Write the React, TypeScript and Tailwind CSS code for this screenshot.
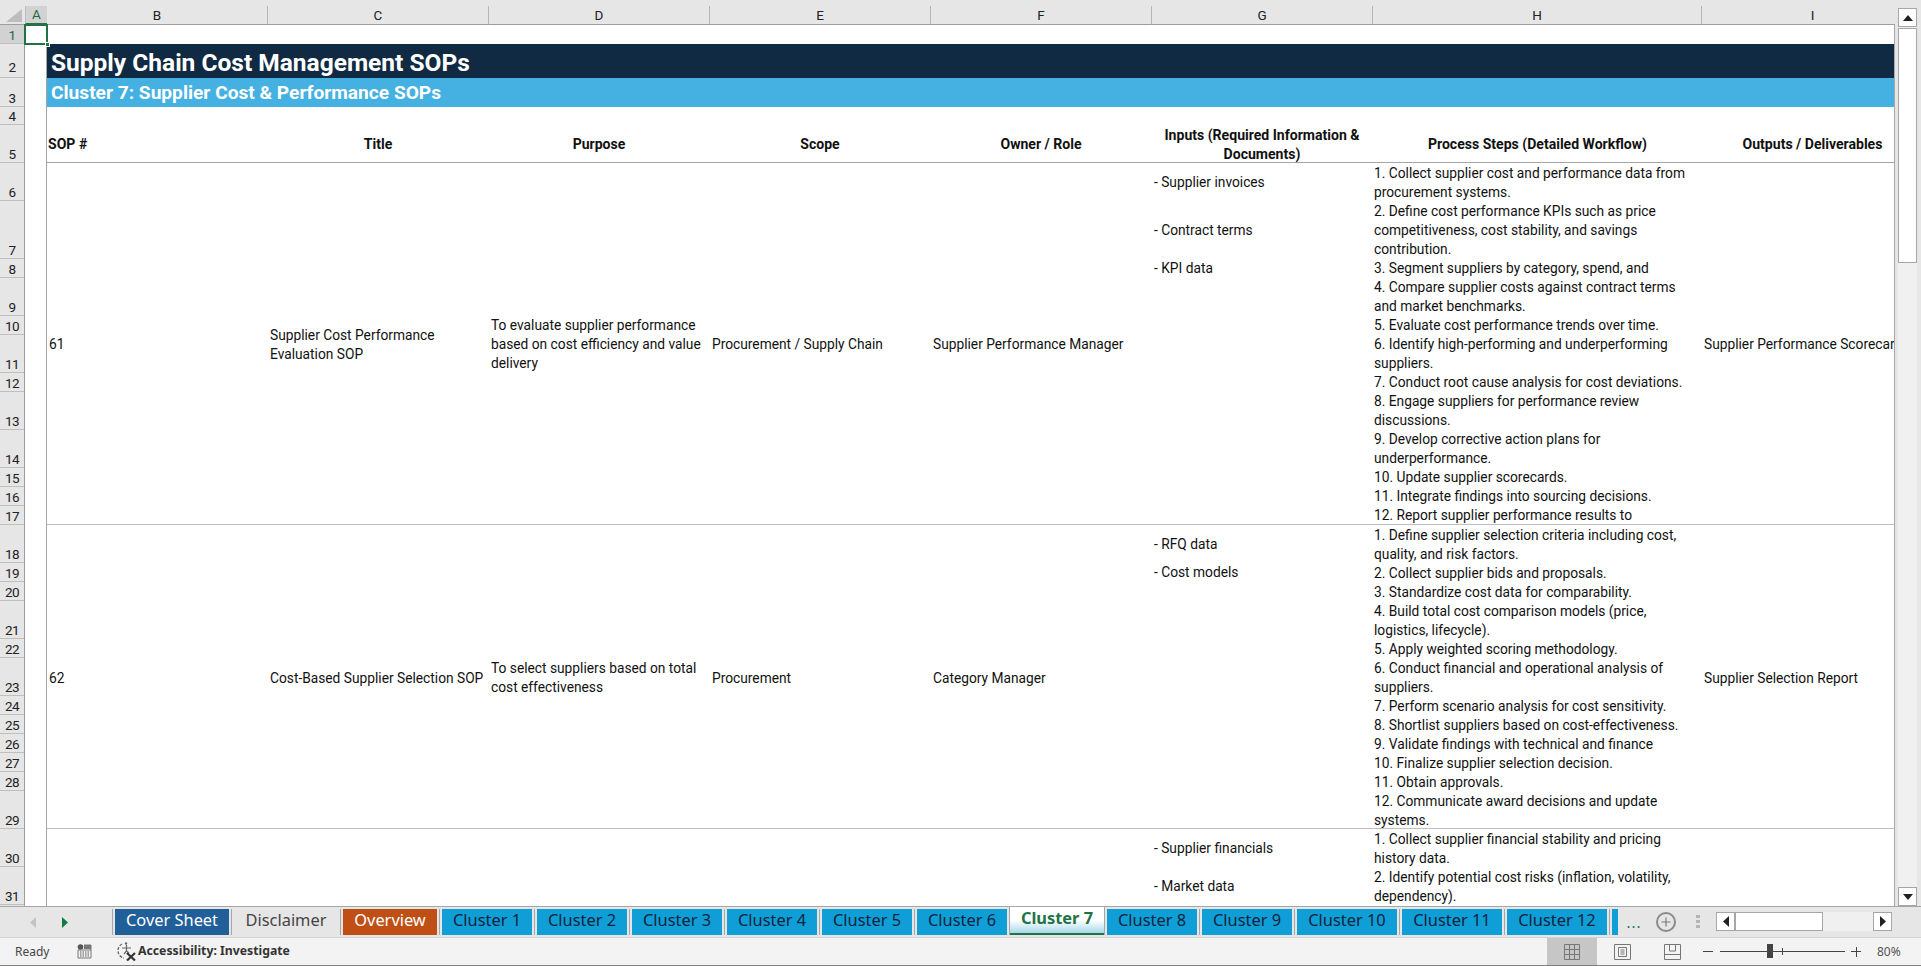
import { Plus } from 'lucide-react';

const COLS = ['B', 'C', 'D', 'E', 'F', 'G', 'H', 'I'];
const TEXT_FONT = "font-['Roboto',sans-serif]";

// [row number, height]: Excel row labels sit at the bottom of each row
const ROW_HEADS: [number, number][] = [
  [1, 19], [2, 34], [3, 29], [4, 18], [5, 38],
  [6, 38], [7, 58], [8, 19], [9, 38], [10, 19], [11, 38], [12, 19], [13, 38], [14, 38], [15, 19], [16, 19], [17, 19],
  [18, 38], [19, 19], [20, 19], [21, 38], [22, 19], [23, 38], [24, 19], [25, 19], [26, 19], [27, 19], [28, 19], [29, 38],
  [30, 38], [31, 38],
];

interface SopRow {
  id: string;
  height: string;
  title: string[];
  purpose: string[];
  scope: string;
  owner: string;
  output: string;
  inputs: { text: string; height: string }[];
  steps: string[];
  border: boolean;
}

const SOPS: SopRow[] = [
  {
    id: '61',
    height: 'h-[362px]',
    title: ['Supplier Cost Performance', 'Evaluation SOP'],
    purpose: ['To evaluate supplier performance', 'based on cost efficiency and value', 'delivery'],
    scope: 'Procurement / Supply Chain',
    owner: 'Supplier Performance Manager',
    output: 'Supplier Performance Scorecards',
    inputs: [
      { text: '- Supplier invoices', height: 'h-[38px]' },
      { text: '- Contract terms', height: 'h-[58px]' },
      { text: '- KPI data', height: 'h-[19px]' },
    ],
    steps: [
      '1. Collect supplier cost and performance data from',
      'procurement systems.',
      '2. Define cost performance KPIs such as price',
      'competitiveness, cost stability, and savings',
      'contribution.',
      '3. Segment suppliers by category, spend, and',
      '4. Compare supplier costs against contract terms',
      'and market benchmarks.',
      '5. Evaluate cost performance trends over time.',
      '6. Identify high-performing and underperforming',
      'suppliers.',
      '7. Conduct root cause analysis for cost deviations.',
      '8. Engage suppliers for performance review',
      'discussions.',
      '9. Develop corrective action plans for',
      'underperformance.',
      '10. Update supplier scorecards.',
      '11. Integrate findings into sourcing decisions.',
      '12. Report supplier performance results to',
    ],
    border: true,
  },
  {
    id: '62',
    height: 'h-[304px]',
    title: ['Cost-Based Supplier Selection SOP'],
    purpose: ['To select suppliers based on total', 'cost effectiveness'],
    scope: 'Procurement',
    owner: 'Category Manager',
    output: 'Supplier Selection Report',
    inputs: [
      { text: '- RFQ data', height: 'h-[38px]' },
      { text: '- Cost models', height: 'h-[19px]' },
    ],
    steps: [
      '1. Define supplier selection criteria including cost,',
      'quality, and risk factors.',
      '2. Collect supplier bids and proposals.',
      '3. Standardize cost data for comparability.',
      '4. Build total cost comparison models (price,',
      'logistics, lifecycle).',
      '5. Apply weighted scoring methodology.',
      '6. Conduct financial and operational analysis of',
      'suppliers.',
      '7. Perform scenario analysis for cost sensitivity.',
      '8. Shortlist suppliers based on cost-effectiveness.',
      '9. Validate findings with technical and finance',
      '10. Finalize supplier selection decision.',
      '11. Obtain approvals.',
      '12. Communicate award decisions and update',
      'systems.',
    ],
    border: true,
  },
  {
    id: '',
    height: 'h-[76px]',
    title: [],
    purpose: [],
    scope: '',
    owner: '',
    output: '',
    inputs: [
      { text: '- Supplier financials', height: 'h-[38px]' },
      { text: '- Market data', height: 'h-[38px]' },
    ],
    steps: [
      '1. Collect supplier financial stability and pricing',
      'history data.',
      '2. Identify potential cost risks (inflation, volatility,',
      'dependency).',
    ],
    border: false,
  },
];

const TABS = [
  { label: 'Cover Sheet', w: 'w-[114px]', cls: 'bg-[#215f9a] text-white' },
  { label: 'Disclaimer', w: 'w-[104px]', cls: 'bg-[#e6e6e6] text-[#444]' },
  { label: 'Overview', w: 'w-[94px]', cls: 'bg-[#c04f15] text-white' },
  { label: 'Cluster 1', w: 'w-[90px]', cls: 'bg-[#0f9ed5] text-[#10243e]' },
  { label: 'Cluster 2', w: 'w-[90px]', cls: 'bg-[#0f9ed5] text-[#10243e]' },
  { label: 'Cluster 3', w: 'w-[90px]', cls: 'bg-[#0f9ed5] text-[#10243e]' },
  { label: 'Cluster 4', w: 'w-[90px]', cls: 'bg-[#0f9ed5] text-[#10243e]' },
  { label: 'Cluster 5', w: 'w-[90px]', cls: 'bg-[#0f9ed5] text-[#10243e]' },
  { label: 'Cluster 6', w: 'w-[90px]', cls: 'bg-[#0f9ed5] text-[#10243e]' },
];
const TABS_AFTER = [
  { label: 'Cluster 8', w: 'w-[90px]' },
  { label: 'Cluster 9', w: 'w-[90px]' },
  { label: 'Cluster 10', w: 'w-[100px]' },
  { label: 'Cluster 11', w: 'w-[100px]' },
  { label: 'Cluster 12', w: 'w-[100px]' },
];

function Lines({ lines }: { lines: string[] }) {
  return (
    <div>
      {lines.map((l, i) => (
        <div key={i} className="h-[19px] leading-[19px] whitespace-nowrap">
          {l}
        </div>
      ))}
    </div>
  );
}

function Cell({ children }: { children?: React.ReactNode }) {
  return <div className="flex items-center pl-[2px] pt-px overflow-hidden">{children}</div>;
}

function Sheet() {
  return (
    <div className={`w-[1847px] shrink-0 overflow-hidden text-[13.75px] text-[#111] ${TEXT_FONT}`}>
      <div className="h-[19px]" />
      <div className="h-[34px] bg-[#102a43] pl-[4px] text-[24.5px] leading-[38px] font-bold whitespace-nowrap text-white">
        Supply Chain Cost Management SOPs
      </div>
      <div className="h-[29px] bg-[#45b1e3] pl-[4px] text-[19.15px] leading-[29px] font-bold whitespace-nowrap text-white">
        Cluster 7: Supplier Cost &amp; Performance SOPs
      </div>
      <div className="h-[18px]" />
      {/* Header row */}
      <div className="grid h-[38px] grid-cols-[221px_221px_221px_221px_221px_221px_329px_221px] border-b border-[#a6a6a6] pt-px text-[14.05px] font-bold">
        <div className="flex items-center pl-[1px]">SOP #</div>
        <div className="flex items-center justify-center pr-px">Title</div>
        <div className="flex items-center justify-center pr-px">Purpose</div>
        <div className="flex items-center justify-center pr-px">Scope</div>
        <div className="flex items-center justify-center pr-px">Owner / Role</div>
        <div className="flex items-center justify-center pr-px text-center">
          <Lines lines={['Inputs (Required Information &', 'Documents)']} />
        </div>
        <div className="flex items-center justify-center">Process Steps (Detailed Workflow)</div>
        <div className="flex items-center justify-center">Outputs / Deliverables</div>
      </div>
      {/* Data rows */}
      {SOPS.map((s, i) => (
        <div
          key={i}
          className={`grid grid-cols-[221px_221px_221px_221px_221px_221px_329px_221px] ${s.height} ${
            s.border ? 'border-b border-[#bfbfbf]' : ''
          }`}
        >
          <Cell>{s.id}</Cell>
          <Cell>
            <Lines lines={s.title} />
          </Cell>
          <Cell>
            <Lines lines={s.purpose} />
          </Cell>
          <Cell>{s.scope}</Cell>
          <Cell>{s.owner}</Cell>
          <div className="pl-[2px]">
            {s.inputs.map((inp) => (
              <div key={inp.text} className={`flex items-center ${inp.height}`}>
                {inp.text}
              </div>
            ))}
          </div>
          <div className="pl-[1px] pt-px">
            <Lines lines={s.steps} />
          </div>
          <Cell>
            <span className="whitespace-nowrap">{s.output}</span>
          </Cell>
        </div>
      ))}
    </div>
  );
}

function TabSep() {
  return <div className="mx-[2px] h-[26px] w-px shrink-0 bg-[#a6a6a6]" />;
}

function Tab({ label, w, cls }: { label: string; w: string; cls: string }) {
  return (
    <div className={`flex h-[26px] shrink-0 items-center justify-center pb-[4px] ${w} ${cls}`}>{label}</div>
  );
}

function SheetTabs() {
  return (
    <div className="flex h-[31px] shrink-0 items-start border-b border-[#d4d4d4] bg-[#e6e6e6] font-['Noto_Sans',sans-serif] text-[16.4px]">
      {/* nav arrows */}
      <div className="flex h-[29px] w-[110px] shrink-0 items-center pl-[30px] pt-[2px]">
        <svg width="6" height="11" viewBox="0 0 6 11">
          <path d="M6 0 L0 5.5 L6 11 Z" fill="#c4c4c4" />
        </svg>
        <svg className="ml-[26px]" width="6" height="11" viewBox="0 0 6 11">
          <path d="M0 0 L6 5.5 L0 11 Z" fill="#107c41" />
        </svg>
      </div>
      <div className="flex items-center pt-[2px]">
        <TabSep />
        {TABS.map((t) => (
          <div key={t.label} className="flex items-center">
            <Tab {...t} />
            <TabSep />
          </div>
        ))}
      </div>
      {/* active tab */}
      <div className="-ml-[3px] flex h-[28px] w-[96px] shrink-0 flex-col border-x border-[#a6a6a6] bg-white">
        <div className="flex h-[26px] items-center justify-center bg-gradient-to-b from-white via-white to-[#a8d8ea] pb-[3px] font-bold text-[#217346]">
          Cluster 7
        </div>
        <div className="h-[2px] bg-[#217346]" />
      </div>
      <div className="-ml-[3px] flex items-center pt-[2px]">
        {TABS_AFTER.map((t) => (
          <div key={t.label} className="flex items-center">
            <TabSep />
            <Tab label={t.label} w={t.w} cls="bg-[#0f9ed5] text-[#10243e]" />
          </div>
        ))}
        <TabSep />
        <div className="h-[26px] w-[6px] bg-[#0f9ed5]" />
      </div>
      {/* overflow + add */}
      <div className="ml-[6px] mt-[8px] w-[20px] text-center text-[15px] leading-[14px] tracking-[1px] text-[#107c41]">
        ...
      </div>
      <div className="ml-[12px] mt-[5px] flex h-[20px] w-[20px] items-center justify-center rounded-full border-2 border-[#8a8a8a]">
        <Plus size={14} strokeWidth={2} className="text-[#7a7a7a]" />
      </div>
      <div className="ml-[20px] mt-[8px] flex flex-col gap-[2px]">
        <div className="h-[3px] w-[4px] bg-[#b5b5b5]" />
        <div className="h-[3px] w-[4px] bg-[#b5b5b5]" />
        <div className="h-[3px] w-[4px] bg-[#b5b5b5]" />
      </div>
      {/* horizontal scrollbar */}
      <div className="ml-[16px] mt-[5px] flex h-[19px] w-[176px] shrink-0 bg-[#f0f0f0]">
        <div className="flex w-[19px] items-center justify-center border border-[#a6a6a6] bg-white">
          <svg width="6" height="11" viewBox="0 0 6 11">
            <path d="M6 0 L0 5.5 L6 11 Z" fill="#222" />
          </svg>
        </div>
        <div className="w-[88px] border border-[#a6a6a6] bg-white" />
        <div className="flex-1" />
        <div className="flex w-[19px] items-center justify-center border border-[#a6a6a6] bg-white">
          <svg width="6" height="11" viewBox="0 0 6 11">
            <path d="M0 0 L6 5.5 L0 11 Z" fill="#222" />
          </svg>
        </div>
      </div>
    </div>
  );
}

function StatusBar() {
  return (
    <div className="flex h-[28px] shrink-0 items-center border-b border-[#808080] bg-[#f3f3f3] font-['Noto_Sans',sans-serif] text-[12px] text-[#444]">
      <span className="ml-[15px] w-[62px]">Ready</span>
      <svg width="15" height="15" viewBox="0 0 15 15" className="shrink-0">
        <circle cx="3.5" cy="3" r="2.8" fill="#555" />
        <path d="M7 1 H14 V14 H1 V6 H14" fill="none" stroke="#777" strokeWidth="1" />
        <rect x="7" y="1" width="7" height="4" fill="#777" />
        <path d="M3 8 H12 M3 10 H12 M3 12 H12" stroke="#555" strokeWidth="1" strokeDasharray="1.5 1" />
      </svg>
      <svg width="20" height="19" viewBox="0 0 20 19" className="ml-[24px] shrink-0">
        <path d="M6 2 A7.5 7.5 0 0 0 8 16" fill="none" stroke="#666" strokeWidth="1.3" strokeDasharray="3 1.4" />
        <circle cx="10" cy="1.5" r="1.2" fill="#666" />
        <path d="M6 6 H15 M10.5 3 V9 L8 12 M10.5 9 L13 11" fill="none" stroke="#666" strokeWidth="1.2" />
        <path d="M11 11 L19 18.5 M19 11 L11 18.5" stroke="#333" strokeWidth="2.2" />
      </svg>
      <span className="ml-[2px] text-[12.25px] font-bold whitespace-nowrap text-[#333]">Accessibility: Investigate</span>
      <div className="flex-1" />
      <div className="flex h-full w-[50px] items-center justify-center bg-[#c6c6c6]">
        <svg width="16" height="16" viewBox="0 0 16 16">
          <path d="M.5.5 H15.5 V15.5 H.5 Z M5.5.5 V15.5 M10.5.5 V15.5 M.5 5.5 H15.5 M.5 10.5 H15.5" fill="none" stroke="#777" />
        </svg>
      </div>
      <div className="flex w-[50px] items-center justify-center">
        <svg width="17" height="16" viewBox="0 0 17 16">
          <path d="M.5.5 H16.5 V15.5 H.5 Z" fill="none" stroke="#777" />
          <path d="M4.5 3.5 H12.5 V12.5 H4.5 Z M6.5 6 H10.5 M6.5 8 H10.5 M6.5 10 H10.5" fill="none" stroke="#777" />
        </svg>
      </div>
      <div className="flex w-[50px] items-center justify-center">
        <svg width="17" height="16" viewBox="0 0 17 16">
          <path d="M.5.5 H16.5 V15.5 H.5 Z M.5 10.5 H16.5 M5.5.5 V7 H11.5 V.5" fill="none" stroke="#777" />
        </svg>
      </div>
      {/* zoom slider */}
      <div className="ml-[6px] h-px w-[10px] bg-[#444]" />
      <div className="relative ml-[7px] h-px w-[125px] bg-[#444]">
        <div className="absolute left-[47px] top-[-7px] h-[14px] w-[6px] bg-[#444]" />
        <div className="absolute left-[62px] top-[-3px] h-[7px] w-px bg-[#444]" />
      </div>
      <div className="relative ml-[6px] h-[10px] w-[10px]">
        <div className="absolute left-0 top-[4.5px] h-px w-[10px] bg-[#444]" />
        <div className="absolute left-[4.5px] top-0 h-[10px] w-px bg-[#444]" />
      </div>
      <span className="ml-[16px] mr-[20px] w-[24px] whitespace-nowrap text-[#555]">80%</span>
    </div>
  );
}

export default function App() {
  return (
    <div className="flex h-[966px] w-[1921px] flex-col overflow-hidden bg-[#e6e6e6]">
      {/* Column headers */}
      <div className={`flex h-[25px] shrink-0 pt-[6px] text-[13.5px] text-[#222] ${TEXT_FONT}`}>
        <div className="flex w-[25px] shrink-0 items-end justify-end border-b border-[#9e9e9e]">
          <svg width="16" height="13" viewBox="0 0 16 13" className="mb-[2px] mr-[3px]">
            <path d="M16 0 V13 H0 Z" fill="#bdbdbd" />
          </svg>
        </div>
        <div className="flex w-[22px] shrink-0 items-center justify-center border-b-2 border-l border-[#217346] border-l-[#bdbdbd] bg-[#d2d2d2] text-[#1d6b41]">
          A
        </div>
        {COLS.map((c, i) => (
          <div
            key={c}
            className={`flex shrink-0 items-center justify-center border-b border-[#9e9e9e] ${
              c === 'H' ? 'w-[329px]' : i === 7 ? 'w-[193px] pl-[28px]' : 'w-[221px]'
            } ${i < 7 ? 'border-r border-r-[#b5b5b5]' : ''}`}
          >
            {c}
          </div>
        ))}
      </div>

      {/* Grid area */}
      <div className="flex h-[881px] shrink-0">
        {/* Row headers */}
        <div className={`w-[25px] shrink-0 overflow-hidden border-r border-[#9e9e9e] text-[13.5px] tracking-[-0.5px] text-[#222] ${TEXT_FONT}`}>
          {ROW_HEADS.map(([n, h]) => (
            <div
              key={n}
              style={{ height: h }}
              className={`flex shrink-0 items-end justify-center border-b border-[#bfbfbf] leading-[16px] ${
                n === 1 ? 'bg-[#d2d2d2] text-[#1d6b41]' : ''
              } ${n === 2 ? 'pb-[2px]' : ''}`}
            >
              {n}
            </div>
          ))}
        </div>
        {/* Column A, selection box over it */}
        <div className="relative w-[22px] shrink-0 border-r border-[#a6a6a6] bg-white">
          <div className="absolute left-[-1px] top-[-1px] h-[21px] w-[24px] border-2 border-[#217346]" />
          <div className="absolute left-[20px] top-[17px] h-[5px] w-[5px] border border-white bg-[#217346]" />
        </div>
        <div className="flex w-[1847px] shrink-0 overflow-hidden bg-white">
          <Sheet />
        </div>
        {/* Vertical scrollbar */}
        <div className="ml-0 w-[27px] shrink-0 border-l border-[#a6a6a6] bg-[#e6e6e6]">
          <div className="ml-[3px] flex h-[881px] w-[19px] flex-col bg-[#f0f0f0]">
            <div className="-mt-[17px] flex h-[19px] shrink-0 items-center justify-center border border-[#a6a6a6] bg-white">
              <svg width="10" height="6" viewBox="0 0 10 6">
                <path d="M0 6 L5 0 L10 6 Z" fill="#222" />
              </svg>
            </div>
            <div className="mt-px h-[235px] shrink-0 border border-[#a6a6a6] bg-white" />
            <div className="flex-1" />
            <div className="flex h-[19px] shrink-0 items-center justify-center border border-[#a6a6a6] bg-white">
              <svg width="10" height="6" viewBox="0 0 10 6">
                <path d="M0 0 L5 6 L10 0 Z" fill="#222" />
              </svg>
            </div>
          </div>
        </div>
      </div>

      <div className="h-px shrink-0 bg-[#a6a6a6]" />
      <SheetTabs />
      <StatusBar />
    </div>
  );
}
